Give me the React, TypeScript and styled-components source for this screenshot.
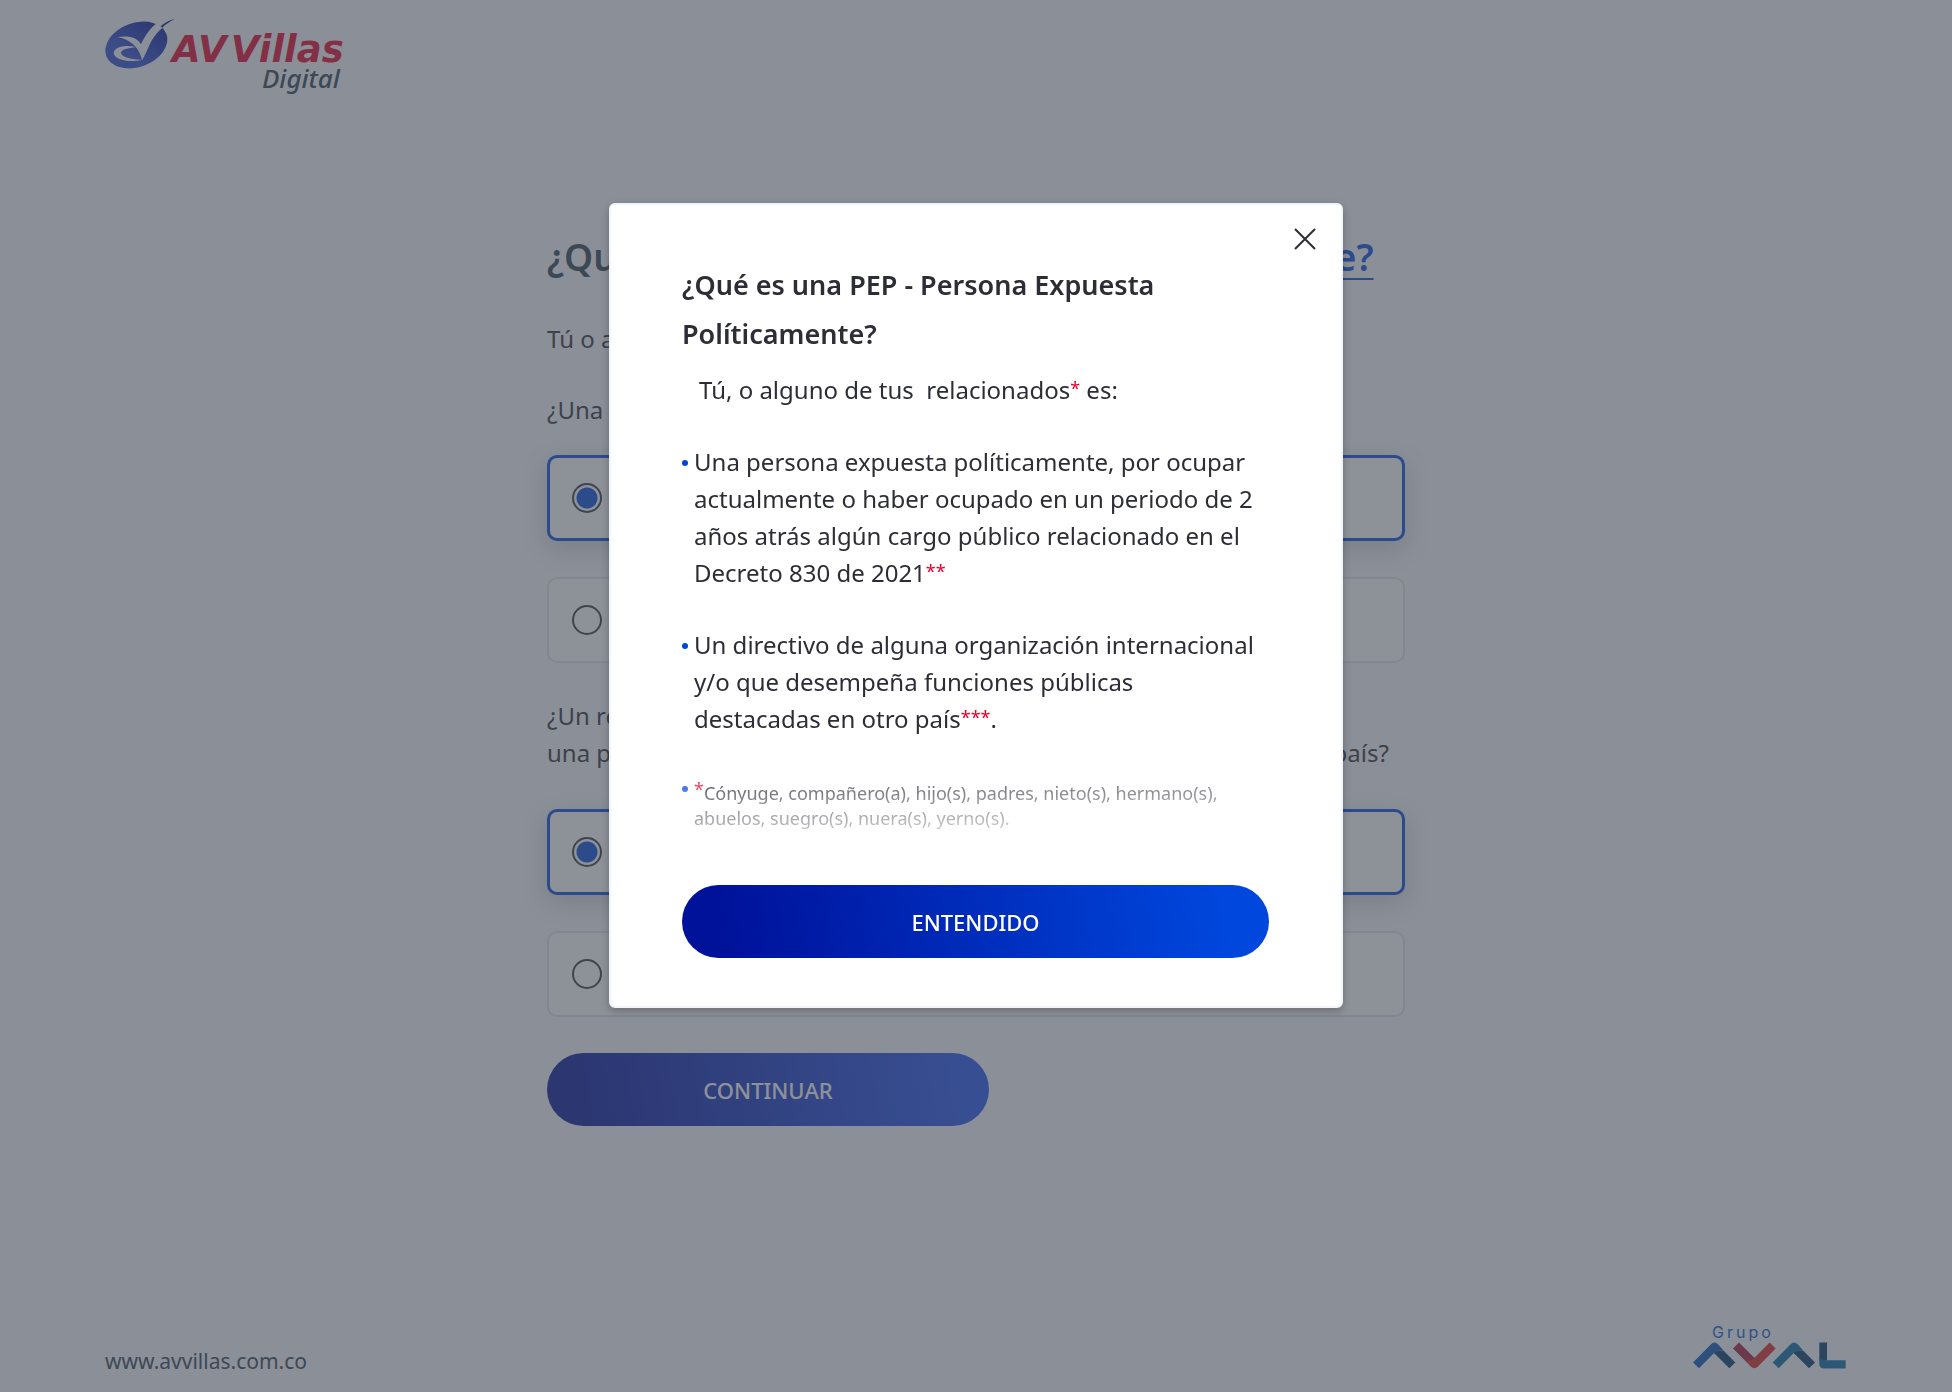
import React from "react";
import styled, { createGlobalStyle, css } from "styled-components";

const color = {
  page: "#f9fafc",
  ink: "#2d2d37",
  slate: "#2f4050",
  blue: "#0047dd",
  navy: "#00129a",
  red: "#e4002b",
};

const GlobalStyle = createGlobalStyle`
  *, *::before, *::after { box-sizing: border-box; }
  body {
    margin: 0;
    background: ${color.page};
    color: ${color.ink};
    font-family: "Noto Sans", "Open Sans", sans-serif;
    font-size: 24px;
    line-height: 37px;
  }
  h1, h2, p, ul, fieldset { margin: 0; padding: 0; border: 0; min-width: 0; }
`;

const Page = styled.div`
  display: flex;
  flex-direction: column;
  min-height: 100vh;
`;

const Header = styled.header`
  display: flex;
  padding: 18px 105px 0;
  height: 110px;
`;

const Brand = styled.a`
  display: flex;
  align-items: flex-start;
  color: ${color.red};
  text-decoration: none;
`;

const BrandText = styled.span`
  display: flex;
  flex-direction: column;
  align-items: flex-end;
  margin-left: -5px;
  padding-top: 16px;
`;

const BrandName = styled.span`
  display: flex;
  gap: 4px;
  font: italic 700 37px/32px "DejaVu Sans", sans-serif;
`;

const BrandTag = styled.span`
  font: italic 500 26px/24px "Noto Sans", sans-serif;
  color: ${color.slate};
  padding-right: 4px;
`;

const Main = styled.main`
  width: 100%;
  max-width: 858px;
  margin: 0 auto;
  padding-top: 123px;
`;

const Heading = styled.h1`
  font-size: 37px;
  line-height: 48px;
  font-weight: 600;
  color: ${color.slate};
  white-space: nowrap;
`;

const TermLink = styled.a`
  color: ${color.blue};
  text-decoration: underline;
  text-decoration-thickness: 2px;
  text-underline-offset: 7px;
`;

const Intro = styled.p`
  margin-top: 39px;
`;

const Question = styled.fieldset`
  display: flex;
  flex-direction: column;
  gap: 36px;
  margin-top: 34px;
`;

const Legend = styled.legend<{ $space: number }>`
  padding: 0;
  margin-bottom: ${(p) => p.$space}px;
`;

const Option = styled.label<{ $on?: boolean }>`
  display: flex;
  align-items: center;
  gap: 24px;
  height: 86px;
  padding: 0 23px;
  border: 2px solid #dfe4eb;
  border-radius: 10px;
  background: #ffffff;
  ${(p) =>
    p.$on &&
    css`
      padding: 0 22px;
      border: 3px solid ${color.blue};
      box-shadow: 0 8px 24px rgba(30, 60, 80, 0.22);
    `}
`;

const Radio = styled.input`
  appearance: none;
  width: 30px;
  height: 30px;
  margin: 0;
  border: 2px solid #33363f;
  border-radius: 50%;
  background: transparent;
  &:checked {
    background: radial-gradient(circle, ${color.blue} 10px, transparent 11px);
  }
`;

const PillButton = styled.button<{ $width: string; $end: string }>`
  display: block;
  width: ${(p) => p.$width};
  height: 73px;
  border: 0;
  border-radius: 37px;
  background: linear-gradient(80deg, ${color.navy} 8%, ${(p) => p.$end} 92%);
  color: #ffffff;
  font-family: inherit;
  font-size: 22px;
  line-height: 28px;
  font-weight: 500;
  cursor: pointer;
`;

const Actions = styled.div`
  margin-top: 36px;
`;

const Footer = styled.footer`
  display: flex;
  justify-content: space-between;
  align-items: flex-end;
  margin-top: auto;
  padding: 0 106px 17px 105px;
`;

const SiteLink = styled.a`
  font-size: 21px;
  line-height: 28px;
  color: ${color.slate};
  text-decoration: none;
`;

const Group = styled.a`
  display: flex;
  flex-direction: column;
  padding-bottom: 6px;
  color: #005acf;
  text-decoration: none;
`;

const GroupName = styled.span`
  padding-left: 19px;
  font-family: Inter, sans-serif;
  font-size: 16px;
  line-height: 20px;
  letter-spacing: 3px;
`;

const Backdrop = styled.div`
  position: fixed;
  inset: 0;
  display: flex;
  justify-content: center;
  align-items: flex-start;
  padding-top: 203px;
  background: rgba(71, 77, 88, 0.62);
`;

const Dialog = styled.section`
  position: relative;
  width: 734px;
  max-width: 100%;
  padding: 55px 72px 48px 71px;
  border: 2px solid #f1f4f8;
  border-radius: 6px;
  background: #ffffff;
  box-shadow: 0 3px 8px rgba(0, 0, 0, 0.25);
`;

const CloseButton = styled.button`
  position: absolute;
  top: 18px;
  right: 20px;
  display: grid;
  place-items: center;
  width: 32px;
  height: 32px;
  padding: 0;
  border: 0;
  background: none;
  color: ${color.ink};
  cursor: pointer;
`;

const DialogTitle = styled.h2`
  font-size: 27px;
  line-height: 49px;
  font-weight: 600;
`;

const DialogBody = styled.div`
  position: relative;
  height: 487px;
  margin-bottom: 40px;
  padding-top: 13px;
  overflow: hidden;
`;

const Lead = styled.p`
  padding-left: 17px;
  white-space: pre-wrap;
`;

const Points = styled.ul`
  display: flex;
  flex-direction: column;
  gap: 35px;
  padding: 35px 6px 0 0;
  list-style: none;
`;

const Point = styled.li<{ $note?: boolean }>`
  display: grid;
  grid-template-columns: 6px 1fr;
  column-gap: 6px;
  &::before {
    content: "";
    width: 6px;
    height: 6px;
    margin-top: 17px;
    border-radius: 50%;
    background: ${color.blue};
  }
  ${(p) =>
    p.$note &&
    css`
      padding-top: 9px;
      font-size: 18px;
      line-height: 25px;
      &::before {
        margin-top: 5px;
      }
    `}
`;

const Mark = styled.span`
  color: ${color.red};
  font-size: 18px;
  line-height: 1px;
  vertical-align: 4px;
`;

const Fade = styled.div`
  position: absolute;
  left: 0;
  right: 0;
  bottom: 0;
  height: 65px;
  background: linear-gradient(178deg, rgba(255, 255, 255, 0.2), #ffffff);
  pointer-events: none;
`;

const BrandMark = () => (
  <svg width="72" height="52" viewBox="75 55 216 156" aria-hidden="true">
    <defs>
      <linearGradient id="oval" x1="0" y1="0.7" x2="1" y2="0.2">
        <stop offset="0.3" stopColor="#2a4ad2" />
        <stop offset="1" stopColor="#001496" />
      </linearGradient>
    </defs>
    <ellipse cx="169" cy="136" rx="96" ry="66" transform="rotate(-20 169 136)" fill="url(#oval)" />
    <path
      d="M112 112 C144 107 172 112 183 134 C196 106 212 84 234 68 L284 57 C248 78 224 104 210 132 C202 150 194 170 186 182 C181 154 162 122 112 112 Z"
      fill={color.page}
    />
    <path
      d="M168 142 C138 134 100 141 101 161 C104 182 150 190 186 180 C158 179 125 174 123 160 C122 149 146 146 168 142 Z"
      fill={color.page}
    />
    <path d="M242 80 C254 69 268 61 285 57 C268 66 256 74 247 84 Z" fill="#00148a" />
  </svg>
);

const GroupMark = () => (
  <svg width="153" height="27" viewBox="99 125 459 80" aria-hidden="true">
    <path d="M163 150 L179 149 L191 151 L226 186 L208 203 L163 158 Z" fill="#003568" />
    <path d="M99 186 L153 131 Q163 121 174 131 L191 150 Q174 146 163 157 L117 203 Z" fill="#0056b4" />
    <path d="M219 144 L237 126 L283 172 L274 186 L261 186 Z" fill="#a31b38" />
    <path d="M261 180 Q274 182 284 171 L329 126 L347 144 L294 198 Q283 208 272 198 L255 179 Z" fill="#dc2322" />
    <path d="M402 150 L418 149 L430 151 L465 186 L447 203 L402 158 Z" fill="#003568" />
    <path d="M338 186 L392 131 Q402 121 413 131 L430 150 Q413 146 402 157 L356 203 Z" fill="#006aa2" />
    <path d="M478 126 H501 V180 H478 Z" fill="#003568" />
    <path d="M478 172 Q482 180 501 179 H557 V204 H492 Q478 204 478 190 Z" fill="#006aa2" />
  </svg>
);

type ChoiceProps = { name: string; legend: React.ReactNode; space: number };

const Choice = ({ name, legend, space }: ChoiceProps) => (
  <Question>
    <Legend $space={space}>{legend}</Legend>
    <Option $on>
      <Radio type="radio" name={name} value="no" defaultChecked />
      No
    </Option>
    <Option>
      <Radio type="radio" name={name} value="si" />
      Sí
    </Option>
  </Question>
);

export default function App() {
  return (
    <>
      <GlobalStyle />
      <Page>
        <Header>
          <Brand href="#inicio">
            <BrandMark />
            <BrandText>
              <BrandName>
                <span>AV</span> <span>Villas</span>
              </BrandName>
              <BrandTag>Digital</BrandTag>
            </BrandText>
          </Brand>
        </Header>
        <Main>
          <Heading>
            ¿Qué es una <TermLink href="#pep">Persona Expuesta Políticamente?</TermLink>
          </Heading>
          <Intro>Tú o alguno de tus relacionados es:</Intro>
          <Choice name="pep" space={27} legend="¿Una persona expuesta políticamente?" />
          <Choice
            name="directivo"
            space={38}
            legend={
              <>
                ¿Un representante o directivo de alguna organización internacional o
                <br />
                una persona, que desempeña funciones públicas destacadas, en otro país?
              </>
            }
          />
          <Actions>
            <PillButton type="button" $width="442px" $end="#2050ee">
              CONTINUAR
            </PillButton>
          </Actions>
        </Main>
        <Footer>
          <SiteLink href="#sitio">www.avvillas.com.co</SiteLink>
          <Group href="#aval" aria-label="Grupo Aval">
            <GroupName>Grupo</GroupName>
            <GroupMark />
          </Group>
        </Footer>
      </Page>
      <Backdrop>
        <Dialog role="dialog" aria-modal="true" aria-labelledby="pep-title">
          <CloseButton type="button" aria-label="Cerrar">
            <svg width="22" height="22" viewBox="0 0 22 22" aria-hidden="true">
              <path d="M1 1 L21 21 M21 1 L1 21" stroke="currentColor" strokeWidth="2" />
            </svg>
          </CloseButton>
          <DialogTitle id="pep-title">¿Qué es una PEP - Persona Expuesta Políticamente?</DialogTitle>
          <DialogBody>
            <Lead>
              {"Tú, o alguno de tus  relacionados"}
              <Mark>*</Mark> es:
            </Lead>
            <Points>
              <Point>
                <span>
                  Una persona expuesta políticamente, por ocupar actualmente o haber ocupado en un periodo de 2
                  años atrás algún cargo público relacionado en el Decreto 830 de 2021<Mark>**</Mark>
                </span>
              </Point>
              <Point>
                <span>
                  Un directivo de alguna organización internacional y/o que desempeña funciones públicas
                  destacadas en otro país<Mark>***</Mark>.
                </span>
              </Point>
              <Point $note>
                <span>
                  <Mark>*</Mark>Cónyuge, compañero(a), hijo(s), padres, nieto(s), hermano(s), abuelos,
                  suegro(s), nuera(s), yerno(s).
                </span>
              </Point>
            </Points>
            <Fade />
          </DialogBody>
          <PillButton type="button" $width="100%" $end={color.blue}>
            ENTENDIDO
          </PillButton>
        </Dialog>
      </Backdrop>
    </>
  );
}
